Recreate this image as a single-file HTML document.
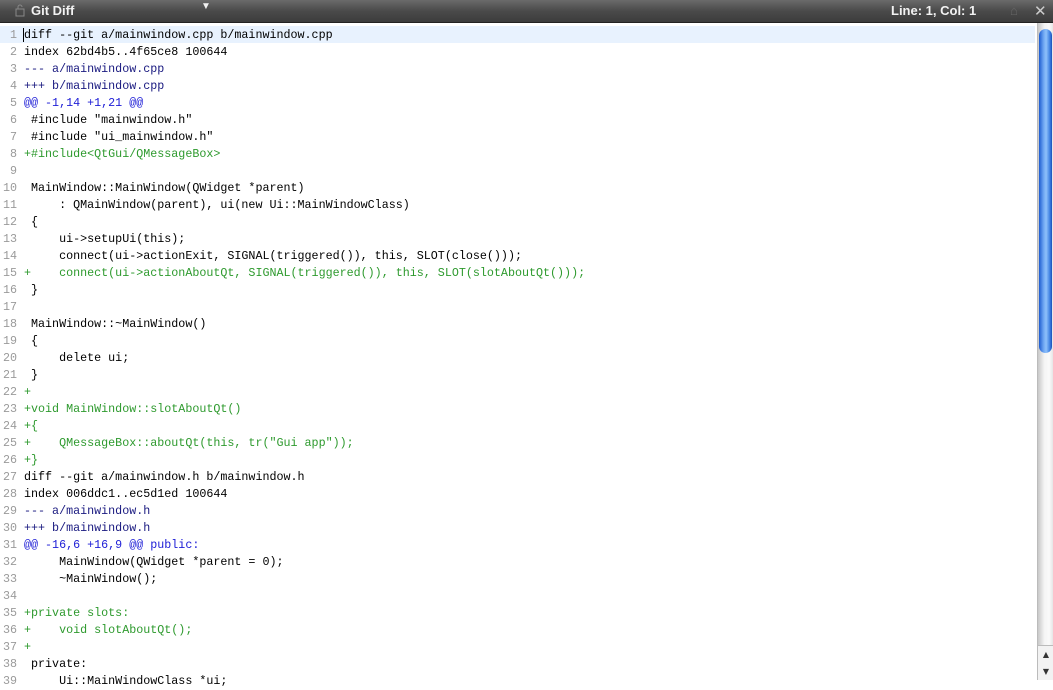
<!DOCTYPE html>
<html><head><style>
body{margin:0;width:1053px;height:679px;overflow:hidden;background:#fff;font-family:"Liberation Mono",monospace;position:relative}
.hdr{position:absolute;left:0;top:0;width:1053px;height:22px;background:linear-gradient(#6a6a6a,#4a4a4a 50%,#3c3c3c);border-bottom:1px solid #222;color:#f2f2f2;font-family:"Liberation Sans",sans-serif;font-weight:bold;font-size:13px}
.code{position:absolute;left:0;top:26px;font-size:11.7px;line-height:17px}
.l{height:17px;position:relative;white-space:pre;padding-top:1px;box-sizing:border-box}
.n{display:inline-block;width:17px;text-align:right;color:#9a9a9a;margin-right:7px}
.cur{background:#e8f2fe;width:1035px}
.g{color:#2e9a2e}.b{color:#1d1dd6}.d{color:#1a1a80}
.sb{position:absolute;left:1037px;top:23px;width:16px;height:656px;background:linear-gradient(90deg,#c8c8c8,#f4f4f4 40%,#fafafa 70%,#e0e0e0);border-left:1px solid #bbb}
.th{position:absolute;left:1039px;top:29px;width:13px;height:324px;border-radius:7px;background:linear-gradient(90deg,#1c5bd0,#6ea6f2 35%,#8ec0fb 55%,#3a7de0 85%,#1b4fb8);}
</style></head><body>
<div class="hdr">
<svg style="position:absolute;left:15px;top:4px" width="10" height="13"><rect x="1" y="5" width="8" height="7" fill="none" stroke="#888"/><path d="M3 5V3a2 2 0 0 1 4 0" fill="none" stroke="#888"/></svg>
<span style="position:absolute;left:31px;top:3px">Git Diff</span>
<span style="position:absolute;left:201px;top:1px;font-size:10px">▼</span>
<span style="position:absolute;left:891px;top:3px">Line: 1, Col: 1</span>
<span style="position:absolute;left:1010px;top:3px;color:#666;font-weight:normal">⌂</span>
<span style="position:absolute;left:1034px;top:2px;color:#ccc;font-weight:normal;font-size:15px">✕</span>
</div>
<div class="code"><div class="l cur"><span class="n">1</span><span style="border-left:1px solid #000;margin-left:-1px">diff --git a/mainwindow.cpp b/mainwindow.cpp</span></div><div class="l"><span class="n">2</span>index 62bd4b5..4f65ce8 100644</div><div class="l"><span class="n">3</span><span class="d">--- a/mainwindow.cpp</span></div><div class="l"><span class="n">4</span><span class="d">+++ b/mainwindow.cpp</span></div><div class="l"><span class="n">5</span><span class="b">@@ -1,14 +1,21 @@</span></div><div class="l"><span class="n">6</span> #include "mainwindow.h"</div><div class="l"><span class="n">7</span> #include "ui_mainwindow.h"</div><div class="l"><span class="n">8</span><span class="g">+#include&lt;QtGui/QMessageBox&gt;</span></div><div class="l"><span class="n">9</span> </div><div class="l"><span class="n">10</span> MainWindow::MainWindow(QWidget *parent)</div><div class="l"><span class="n">11</span>     : QMainWindow(parent), ui(new Ui::MainWindowClass)</div><div class="l"><span class="n">12</span> {</div><div class="l"><span class="n">13</span>     ui-&gt;setupUi(this);</div><div class="l"><span class="n">14</span>     connect(ui-&gt;actionExit, SIGNAL(triggered()), this, SLOT(close()));</div><div class="l"><span class="n">15</span><span class="g">+    connect(ui-&gt;actionAboutQt, SIGNAL(triggered()), this, SLOT(slotAboutQt()));</span></div><div class="l"><span class="n">16</span> }</div><div class="l"><span class="n">17</span> </div><div class="l"><span class="n">18</span> MainWindow::~MainWindow()</div><div class="l"><span class="n">19</span> {</div><div class="l"><span class="n">20</span>     delete ui;</div><div class="l"><span class="n">21</span> }</div><div class="l"><span class="n">22</span><span class="g">+</span></div><div class="l"><span class="n">23</span><span class="g">+void MainWindow::slotAboutQt()</span></div><div class="l"><span class="n">24</span><span class="g">+{</span></div><div class="l"><span class="n">25</span><span class="g">+    QMessageBox::aboutQt(this, tr("Gui app"));</span></div><div class="l"><span class="n">26</span><span class="g">+}</span></div><div class="l"><span class="n">27</span>diff --git a/mainwindow.h b/mainwindow.h</div><div class="l"><span class="n">28</span>index 006ddc1..ec5d1ed 100644</div><div class="l"><span class="n">29</span><span class="d">--- a/mainwindow.h</span></div><div class="l"><span class="n">30</span><span class="d">+++ b/mainwindow.h</span></div><div class="l"><span class="n">31</span><span class="b">@@ -16,6 +16,9 @@ public:</span></div><div class="l"><span class="n">32</span>     MainWindow(QWidget *parent = 0);</div><div class="l"><span class="n">33</span>     ~MainWindow();</div><div class="l"><span class="n">34</span> </div><div class="l"><span class="n">35</span><span class="g">+private slots:</span></div><div class="l"><span class="n">36</span><span class="g">+    void slotAboutQt();</span></div><div class="l"><span class="n">37</span><span class="g">+</span></div><div class="l"><span class="n">38</span> private:</div><div class="l"><span class="n">39</span>     Ui::MainWindowClass *ui;</div></div>
<div class="sb"></div>
<div class="th"></div>
<div style="position:absolute;left:1037px;top:645px;width:16px;height:34px;background:#f2f2f2;border-left:1px solid #bbb;border-top:1px solid #bbb;font-size:8px;color:#333;text-align:center;line-height:17px;font-family:'DejaVu Sans',sans-serif">▲<br>▼</div>
</body></html>
